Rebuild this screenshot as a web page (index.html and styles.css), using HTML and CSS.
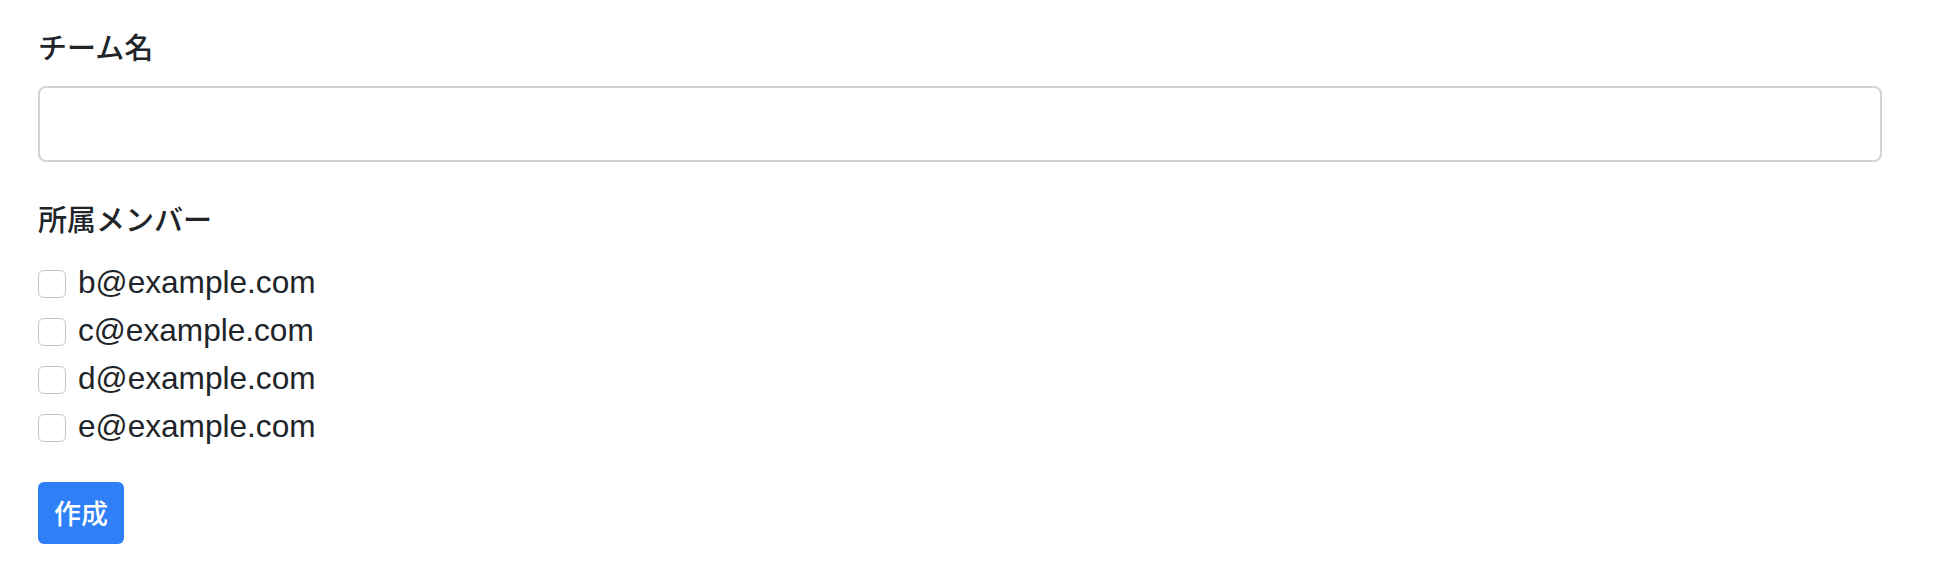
FILE: index.html
```html
<!DOCTYPE html>
<html lang="ja">
<head>
<meta charset="utf-8">
<title>チーム作成</title>
<link rel="stylesheet" href="styles.css">
</head>
<body>
<form class="team-form">
  <div class="form-group">
    <label class="form-label" for="team-name">チーム名</label>
    <input class="form-control" id="team-name" type="text">
  </div>
  <div class="form-group">
    <div class="form-label">所属メンバー</div>
    <label class="form-check"><input type="checkbox" class="check"><span class="check-text">b@example.com</span></label>
    <label class="form-check"><input type="checkbox" class="check"><span class="check-text">c@example.com</span></label>
    <label class="form-check"><input type="checkbox" class="check"><span class="check-text">d@example.com</span></label>
    <label class="form-check"><input type="checkbox" class="check"><span class="check-text">e@example.com</span></label>
  </div>
  <button type="button" class="btn">作成</button>
</form>
</body>
</html>
```
FILE: styles.css
```css
html, body {
  margin: 0;
  padding: 0;
  background: #ffffff;
}
body {
  font-family: "Liberation Sans", "Noto Sans CJK JP", sans-serif;
  font-size: 32px;
  line-height: 48px;
  color: #212529;
}
.team-form {
  padding: 22px 66px 0 38px;
}
.form-group {
  margin-bottom: 32px;
  display: flex;
  flex-direction: column;
}
.form-label {
  display: block;
  font-family: "Noto Sans CJK JP", sans-serif;
  font-size: 29px;
  font-weight: 500;
  line-height: 48px;
  margin-bottom: 16px;
}
.form-control {
  box-sizing: border-box;
  width: 100%;
  height: 76px;
  margin: 0;
  border: 2px solid #ced4da;
  border-radius: 8px;
  background: #fff;
  font-size: 32px;
  padding: 12px 24px;
  outline: none;
}
.form-check {
  display: flex;
  align-items: center;
  height: 48px;
}
.check {
  appearance: none;
  -webkit-appearance: none;
  box-sizing: border-box;
  width: 28px;
  height: 28px;
  margin: 4px 12px 0 0;
  border: 1.5px solid #c4c4c4;
  border-radius: 6px;
  background: #fff;
  flex: none;
}
.check-text {
  font-family: "Liberation Sans", sans-serif;
  font-size: 31.6px;
  line-height: 48px;
}
.btn {
  box-sizing: border-box;
  width: 86px;
  height: 62px;
  padding: 0;
  border: none;
  border-radius: 6px;
  background: #2f80f7;
  color: #ffffff;
  font-family: "Noto Sans CJK JP", sans-serif;
  font-size: 27px;
  font-weight: 500;
  line-height: 62px;
  text-align: center;
}
```
